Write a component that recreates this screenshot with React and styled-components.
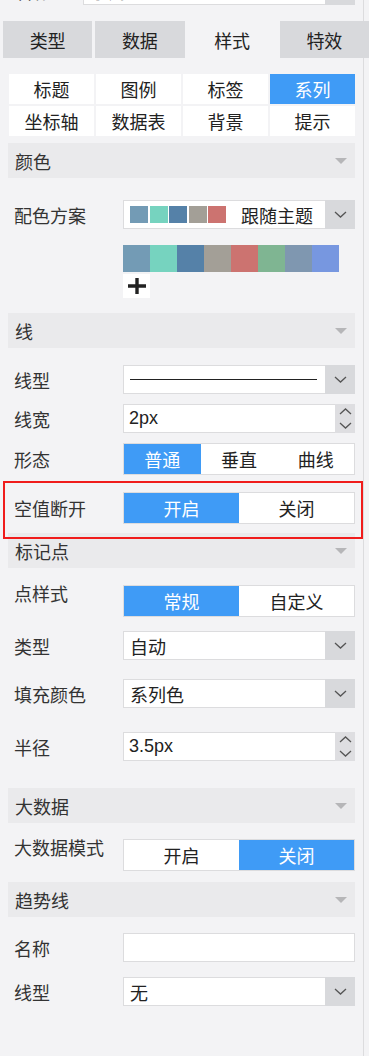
import React from 'react';
import styled, { createGlobalStyle } from 'styled-components';

const GlobalStyle = createGlobalStyle`
	body {
		margin: 0;
		background: #f3f3f5;
		font-family: "Liberation Sans", "Noto Sans CJK SC", sans-serif;
	}
`;

const Page = styled.div`
	width: 369px;
	height: 1056px;
	overflow: hidden;
	background: #f3f3f5;
	display: flex;
	flex-direction: column;
	color: #333;
	font-size: 18px;
`;

const TopBlock = styled.div`
	width: 364px;
	height: 21px;
	box-sizing: border-box;
	border-right: 1px solid #dcdcde;
	padding: 0 8px;
	overflow: hidden;
	flex-shrink: 0;
`;

const TopRow = styled.div`
	display: flex;
	align-items: center;
	height: 29px;
	margin-top: -24px;
`;

const TopLabel = styled.div`
	width: 75px;
	padding-left: 7px;
	box-sizing: border-box;
`;

const Tabs = styled.div`
	display: grid;
	grid-template-columns: repeat(4, 1fr);
	column-gap: 3px;
	padding-left: 3px;
	height: 37px;
	flex-shrink: 0;
`;

const Tab = styled.div`
	display: flex;
	align-items: center;
	justify-content: center;
	background: ${(p) => (p.$active ? 'transparent' : '#d8d9dc')};
	color: #222;
`;

const Body = styled.div`
	flex: 1;
	width: 364px;
	box-sizing: border-box;
	border-right: 1px solid #dcdcde;
	padding: 0 8px;
	display: flex;
	flex-direction: column;
`;

const SubTabs = styled.div`
	display: grid;
	grid-template-columns: repeat(4, 1fr);
	grid-auto-rows: 30px;
	gap: 2px;
	margin-top: 16px;
	padding-left: 1px;
`;

const SubTab = styled.div`
	display: flex;
	align-items: center;
	justify-content: center;
	background: ${(p) => (p.$active ? '#3f9bf6' : '#fff')};
	color: ${(p) => (p.$active ? '#fff' : '#222')};
`;

const Section = styled.div`
	display: flex;
	align-items: center;
	justify-content: space-between;
	height: 35px;
	margin-top: ${(p) => p.$mt}px;
	padding: 0 8px 0 7px;
	background: #eaeaec;
	color: #333;
	flex-shrink: 0;
`;

const Caret = styled.span`
	width: 0;
	height: 0;
	border-left: 6px solid transparent;
	border-right: 6px solid transparent;
	border-top: 6px solid #b6b6b8;
`;

const Row = styled.div`
	display: flex;
	align-items: ${(p) => (p.$top ? 'flex-start' : 'center')};
	margin-top: ${(p) => p.$mt || 0}px;
	flex-shrink: 0;
`;

const Label = styled.div`
	width: 115px;
	flex-shrink: 0;
	padding-left: 6px;
	line-height: ${(p) => (p.$top ? '20px' : 'normal')};
	box-sizing: border-box;
	color: #333;
	white-space: nowrap;
`;

const Field = styled.div`
	display: flex;
	width: ${(p) => p.$w || 232}px;
	height: ${(p) => p.$h || 29}px;
	box-sizing: border-box;
	border: 1px solid #dcdcde;
	background: #fff;
`;

const FieldValue = styled.div`
	flex: 1;
	display: flex;
	align-items: center;
	padding-left: ${(p) => p.$pl || 6}px;
	color: #222;
	overflow: hidden;
	white-space: nowrap;
`;

const ArrowBox = styled.div`
	width: 30px;
	flex-shrink: 0;
	display: flex;
	align-items: center;
	justify-content: center;
	background: #d8d9dc;
	margin: -1px -1px -1px 0;
`;

const SpinBox = styled.div`
	width: 20px;
	flex-shrink: 0;
	display: flex;
	flex-direction: column;
	align-items: center;
	justify-content: center;
	gap: 7px;
	background: #dedee1;
	margin: -1px -1px -1px 0;
`;

const Swatches = styled.div`
	display: flex;
	gap: 1.5px;
	margin-right: 15px;
`;

const Swatch = styled.span`
	width: 18px;
	height: 17px;
	background: ${(p) => p.$c};
`;

const LineSample = styled.span`
	width: 187px;
	height: 1.5px;
	background: #222;
`;

const Palette = styled.div`
	display: flex;
	margin: ${(p) => p.$mt}px 0 0 115px;
	flex-shrink: 0;
`;

const PaletteCell = styled.span`
	width: 27px;
	height: 27px;
	background: ${(p) => p.$c};
`;

const AddButton = styled.div`
	width: 27px;
	height: 24px;
	margin: 2px 0 0 115px;
	background: #fff;
	display: flex;
	align-items: center;
	justify-content: center;
	flex-shrink: 0;
`;

const Segmented = styled.div`
	display: flex;
	width: 232px;
	height: 32px;
	box-sizing: border-box;
	border: 1px solid #dcdcde;
	background: #fff;
`;

const Segment = styled.div`
	flex: 1;
	display: flex;
	align-items: center;
	justify-content: center;
	background: ${(p) => (p.$active ? '#3f9bf6' : '#fff')};
	color: ${(p) => (p.$active ? '#fff' : '#222')};
`;

const Highlighted = styled.div`
	position: relative;
	margin-top: ${(p) => p.$mt}px;
	flex-shrink: 0;
`;

const HighlightFrame = styled.div`
	position: absolute;
	top: -11px;
	bottom: -15px;
	left: -5px;
	right: -8px;
	border: 2px solid #f01c1c;
	pointer-events: none;
`;

const Chevron = ({ up }) => (
	<svg width='13' height='7' viewBox='0 0 13 7'>
		<path
			d={up ? 'M1 6 L6.5 1 L12 6' : 'M1 1 L6.5 6 L12 1'}
			fill='none'
			stroke='#555'
			strokeWidth='1.3'
		/>
	</svg>
);

const Select = ({ children, pl }) => (
	<Field>
		<FieldValue $pl={pl}>{children}</FieldValue>
		<ArrowBox>
			<Chevron />
		</ArrowBox>
	</Field>
);

const NumberInput = ({ value }) => (
	<Field>
		<FieldValue $pl={5}>{value}</FieldValue>
		<SpinBox>
			<Chevron up />
			<Chevron />
		</SpinBox>
	</Field>
);

const Toggle = ({ items, active }) => (
	<Segmented>
		{items.map((t, i) => (
			<Segment key={t} $active={i === active}>
				{t}
			</Segment>
		))}
	</Segmented>
);

const themeColors = ['#739bb5', '#76d3bf', '#5581a8', '#a39f97', '#cc7370'];
const paletteColors = [
	'#739bb5',
	'#76d3bf',
	'#5581a8',
	'#a39f97',
	'#cc7370',
	'#7fb592',
	'#7f97b0',
	'#7797e0',
];

const subTabs = ['标题', '图例', '标签', '系列', '坐标轴', '数据表', '背景', '提示'];

export default function App() {
	return (
		<>
			<GlobalStyle />
			<Page>
				<TopBlock>
					<TopRow>
						<TopLabel>名称</TopLabel>
						<Field $w={272}>
							<FieldValue>系列</FieldValue>
							<ArrowBox />
						</Field>
					</TopRow>
				</TopBlock>

				<Tabs>
					<Tab>类型</Tab>
					<Tab>数据</Tab>
					<Tab $active>样式</Tab>
					<Tab>特效</Tab>
				</Tabs>

				<Body>
					<SubTabs>
						{subTabs.map((t) => (
							<SubTab key={t} $active={t === '系列'}>
								{t}
							</SubTab>
						))}
					</SubTabs>

					<Section $mt={7}>
						颜色
						<Caret />
					</Section>
					<Row $mt={22}>
						<Label>配色方案</Label>
						<Select>
							<Swatches>
								{themeColors.map((c) => (
									<Swatch key={c} $c={c} />
								))}
							</Swatches>
							跟随主题
						</Select>
					</Row>
					<Palette $mt={16}>
						{paletteColors.map((c, i) => (
							<PaletteCell key={i} $c={c} />
						))}
					</Palette>
					<AddButton>
						<svg width='22' height='18' viewBox='0 0 22 18'>
							<path d='M2 9 H20 M11 1 V17' stroke='#222' strokeWidth='3.4' />
						</svg>
					</AddButton>

					<Section $mt={15}>
						线
						<Caret />
					</Section>
					<Row $mt={17}>
						<Label>线型</Label>
						<Select pl={6}>
							<LineSample />
						</Select>
					</Row>
					<Row $mt={10}>
						<Label>线宽</Label>
						<NumberInput value='2px' />
					</Row>
					<Row $mt={10}>
						<Label>形态</Label>
						<Toggle items={['普通', '垂直', '曲线']} active={0} />
					</Row>
					<Highlighted $mt={17}>
						<Row>
							<Label>空值断开</Label>
							<Toggle items={['开启', '关闭']} active={0} />
						</Row>
						<HighlightFrame />
					</Highlighted>

					<Section $mt={9}>
						标记点
						<Caret />
					</Section>
					<Row $mt={17} $top>
						<Label $top>点样式</Label>
						<Toggle items={['常规', '自定义']} active={0} />
					</Row>
					<Row $mt={14}>
						<Label>类型</Label>
						<Select>自动</Select>
					</Row>
					<Row $mt={19}>
						<Label>填充颜色</Label>
						<Select>系列色</Select>
					</Row>
					<Row $mt={24}>
						<Label>半径</Label>
						<NumberInput value='3.5px' />
					</Row>

					<Section $mt={27}>
						大数据
						<Caret />
					</Section>
					<Row $mt={16} $top>
						<Label $top>大数据模式</Label>
						<Toggle items={['开启', '关闭']} active={1} />
					</Row>

					<Section $mt={11}>
						趋势线
						<Caret />
					</Section>
					<Row $mt={16}>
						<Label>名称</Label>
						<Field>
							<FieldValue />
						</Field>
					</Row>
					<Row $mt={15}>
						<Label>线型</Label>
						<Select>无</Select>
					</Row>
				</Body>
			</Page>
		</>
	);
}
